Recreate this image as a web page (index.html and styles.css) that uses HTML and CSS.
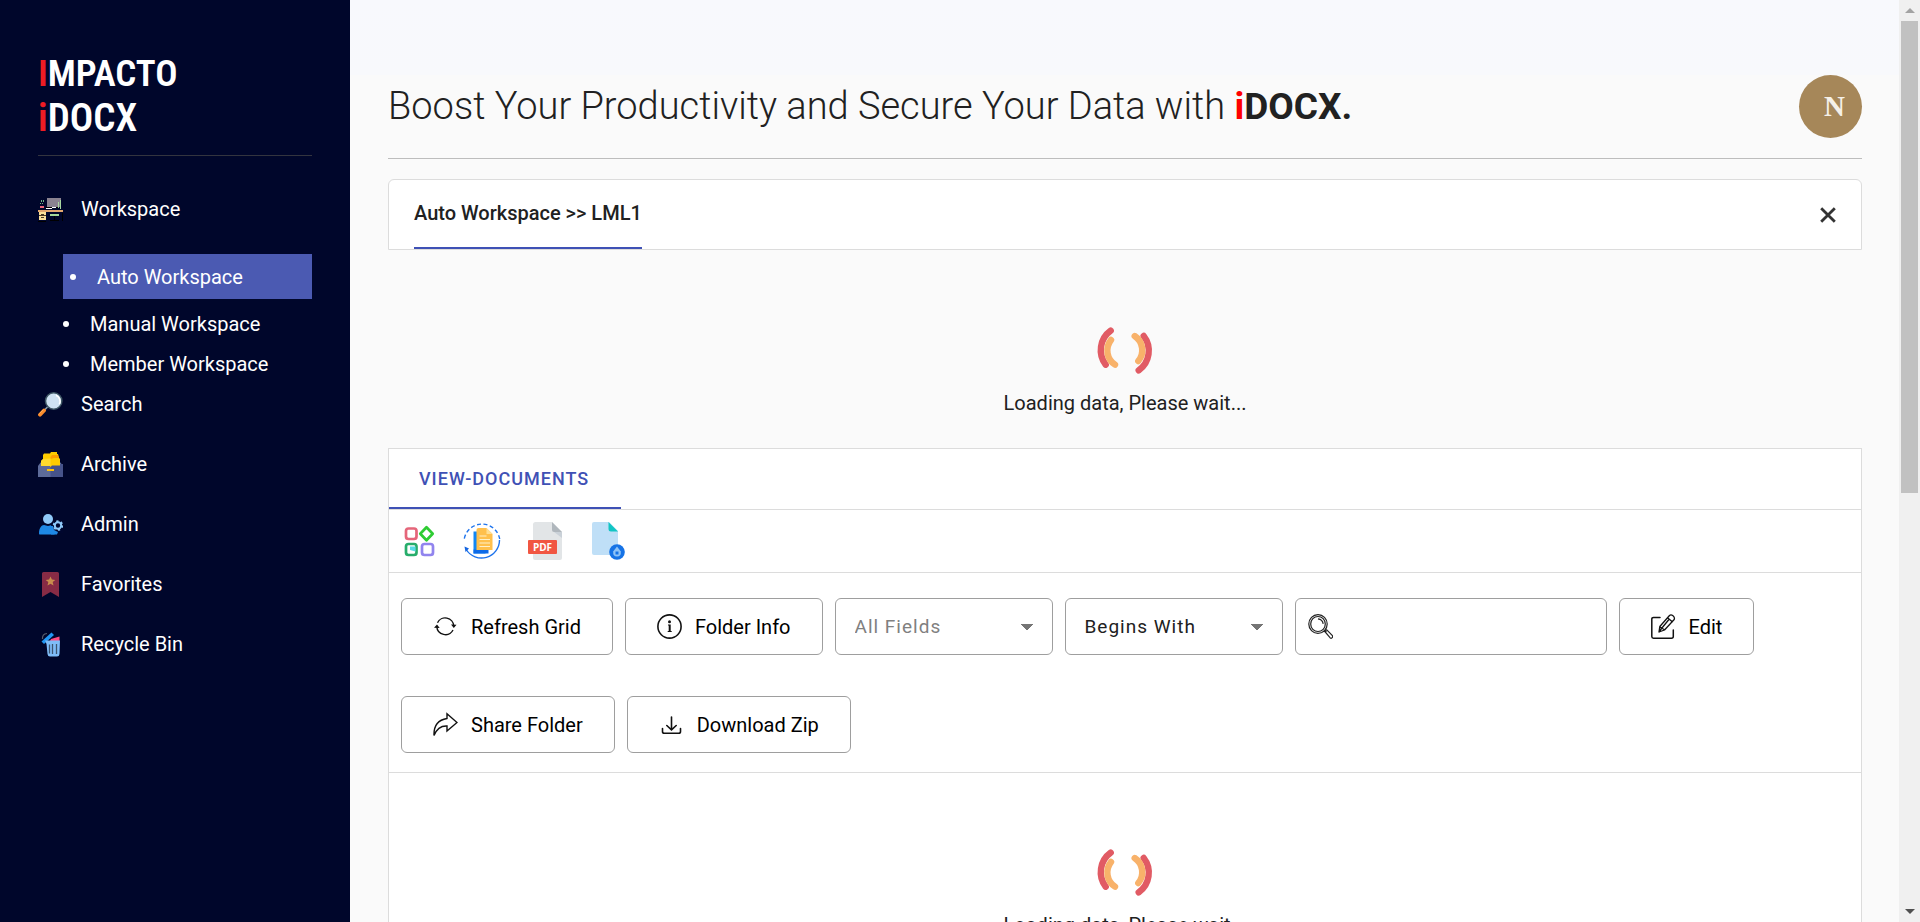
FILE: index.html
```html
<!DOCTYPE html>
<html lang="en">
<head>
<meta charset="utf-8">
<title>iDOCX</title>
<link rel="stylesheet" href="styles.css">
</head>
<body>
<svg class="defs" aria-hidden="true">
  <symbol id="spinner" viewBox="1 0 61 61">
    <g fill="none" stroke-width="6.4" stroke-linecap="round">
      <path stroke="#e15b64" d="M16.7 10.7A24 24 0 0 0 11.7 44.7M49.7 16A24 24 0 0 1 44.7 50.3"/>
      <path stroke="#f8b26a" d="M17 20A17 17 0 0 0 21 44.7M40.7 16A17 17 0 0 1 44.3 41"/>
    </g>
  </symbol>
</svg>
<div class="app">
  <aside class="sidebar">
    <a class="logo" href="#"><span class="logo-top"><i>I</i>MPACTO</span><span class="logo-bottom"><i>i</i>DOCX</span></a>
    <nav class="menu" aria-label="Main">
      <a class="menu-item menu-first" href="#">
        <svg class="menu-icon" viewBox="0 0 25 25"><path fill="#8a8290" d="M9 1h14v9H9z"/><path fill="#000" d="M8 10h12v1H8z"/><path fill="#fff" d="M8 11h6v1H8z"/><path fill="#fff" d="M14 10h4v1h-4z"/><path fill="#6fb98b" d="M3 3h1v2H3zM5 3h1v2H5zM2 6h1v1H2zM4 6h1v1H4z"/><path fill="#e8657a" d="M2 9h4v2H2z"/><path fill="#a8d6a0" d="M20 5h1v6h-1zM22 3h1v9h-1z"/><path fill="#e2a870" d="M0 13h25v2H0z"/><path fill="#fbe09a" d="M1 15h7v8H1z"/><path stroke="#4b3a25" d="M1 18.500h7M3 17.500h3M3 20.500h3"/><path fill="#a5d89a" d="M12 17h9v2h-9z"/><path fill="#000" d="M16 19h1v5h-1zM12 23h9v1h-9zM24 16h1v8h-1zM0 24h8v1H0z"/></svg>
        Workspace</a>
      <ul class="submenu">
        <li class="current"><a href="#">Auto Workspace</a></li>
        <li><a href="#">Manual Workspace</a></li>
        <li><a href="#">Member Workspace</a></li>
      </ul>
      <a class="menu-item" href="#">
        <svg class="menu-icon" viewBox="0 0 25 25"><path stroke="#8aa0ad" stroke-width="1.600" d="M7 17.500l3-3"/><path stroke="#fb8c2d" stroke-width="3.800" stroke-linecap="round" d="M2 22.700l4-4.200"/><path stroke="#ffb05c" stroke-width="1" d="M1.500 21.500l4-4"/><circle cx="15.700" cy="9" r="8.200" fill="#cfe2f2" stroke="#3d5563" stroke-width="1.500"/><path fill="none" stroke="#fff" stroke-width="1.600" d="M18 3.200a6.500 6.500 0 0 1 3.300 9"/></svg>
        Search</a>
      <a class="menu-item" href="#">
        <svg class="menu-icon" viewBox="0 0 25 25"><path fill="#5d6b99" d="M0 14l2.500-3.500h20L25 14v11H0z"/><path fill="#46538a" d="M12.500 12H25v13H12.500z"/><path fill="#fc0" d="M3 14V9l2-2V3l1-1.500h6L13 0h6v2h1l1 4 1 1v6.500h-8L12.500 15l-1-1.500z"/><path fill="#ffa000" d="M12.500 5L14 3h6l1 3h-5l-3.500 1z"/><path fill="#ffda2d" d="M3 14V9l2-2 7.500-.500v7.500z"/><path fill="#ffc107" d="M9 17h7v2H9z"/></svg>
        Archive</a>
      <a class="menu-item" href="#">
        <svg class="menu-icon" viewBox="0 0 25 25"><circle cx="10" cy="7" r="5" fill="#90caf9"/><path fill="#1e88e5" d="M1 21.500C1 16 3.500 13 6 13l4 1 4-1 3 8c0 1-.500 1.500-1.500 1.500H2c-.700 0-1-.300-1-1z"/><path fill="#00062e" d="M14 10h11v11h-5l-4-1-3-6z"/><path fill="#1e88e5" d="M13 14l2 0 1 4 4 2-1 2.500h-6z"/><circle cx="20" cy="13.500" r="3.200" fill="none" stroke="#90caf9" stroke-width="2"/><circle cx="20" cy="13.500" r="4.400" fill="none" stroke="#90caf9" stroke-width="1.700" stroke-dasharray="2.200 2.408"/></svg>
        Admin</a>
      <a class="menu-item" href="#">
        <svg class="menu-icon" viewBox="0 0 25 25"><path fill="#872b45" d="M4 1.500Q4 0 5.500 0h14Q21 0 21 1.500V25l-8.500-5L4 25z"/><path fill="#c98e4e" d="M12.500 4.500l1.400 3.100 3.400.300-2.600 2.200.800 3.400-3-1.800-3 1.800.800-3.400-2.600-2.200 3.400-.300z"/></svg>
        Favorites</a>
      <a class="menu-item" href="#">
        <svg class="menu-icon" viewBox="0 0 25 25"><path fill="none" stroke="#555b6b" stroke-width="1.200" d="M4.500 7Q4 2 9 1.500"/><path fill="#2196f3" d="M3.500 9.500l10-9 2.500 2.500-10 9z"/><path fill="#ff4b82" d="M13 7l8.500-2.500V9H12z"/><path fill="#7fbcf8" d="M7 8.500h15L21.500 22q-.200 2.500-2.500 2.500h-7q-2.200 0-2.500-2.500L8.500 12z"/><path stroke="#3d5570" stroke-width="1.300" d="M11.500 12.500v9M14.500 12v10M18.500 12v10"/></svg>
        Recycle Bin</a>
    </nav>
  </aside>

  <main class="main">
    <header class="header">
      <h1 class="title">Boost Your Productivity and Secure Your Data with <b><span class="accent">i</span>DOCX.</b></h1>
      <button class="avatar" type="button" aria-label="Account">N</button>
    </header>

    <section class="crumbs">
      <a class="crumb" href="#">Auto Workspace &gt;&gt; LML1</a>
      <button class="close" type="button" aria-label="Close"><svg viewBox="0 0 16 16"><path stroke="#333" stroke-width="2.800" d="M1.200 1.200l13.600 13.600M14.800 1.200L1.200 14.800"/></svg></button>
    </section>

    <div class="loading"><svg class="spinner"><use href="#spinner"/></svg><p>Loading data, Please wait...</p></div>

    <section class="documents">
      <div class="tabs"><button class="tab" type="button">VIEW-DOCUMENTS</button></div>
      <div class="tools">
        <button class="tool" type="button" aria-label="Grid">
          <svg viewBox="0 0 38 38"><g fill="#fff" stroke-width="2.700"><rect x="6" y="6.500" width="10.500" height="10.500" rx="2.500" stroke="#e5667a"/><path stroke="#2ecc33" stroke-linejoin="round" d="M26.500 5.300l6.200 6.500-6.200 6.500-6.200-6.500z"/><rect x="6" y="22" width="10.500" height="11" rx="2.500" stroke="#27ad6b"/><rect x="22" y="22" width="11" height="11" rx="2.500" stroke="#9184ee"/></g><path fill="#55dbe6" d="M10 24.500h5.500v5L10 28z"/></svg></button>
        <button class="tool" type="button" aria-label="Copy documents">
          <svg viewBox="0 0 38 38"><g fill="none" stroke="#1f74ec" stroke-width="1.400"><path d="M3.200 27.500A18 18 0 0 0 36.500 18"/><path stroke-dasharray="4 2.500" d="M36.700 17A18 18 0 0 0 1 19"/></g><path fill="#1565e0" d="M1.500 24.500l4.500 2-3.500 3.500z"/><path fill="#1187f5" d="M10.500 9.500h12v22h-12z"/><path fill="#0d6ae8" d="M10.500 27.500h15v4h-15z"/><path fill="#ffc04d" d="M13.500 8q0-2 2-2h8l6 6v16h-16z"/><path fill="#ffdf95" d="M23.500 6l6 6h-6z"/><path stroke="#fff0c8" stroke-width="1.200" d="M16.500 14h7M16.500 17.500h10.500M16.500 21h10.500M16.500 24.500h10.500"/></svg></button>
        <button class="tool" type="button" aria-label="Export PDF">
          <svg viewBox="0 0 38 38"><path fill="#e2e5e7" d="M7 2.500Q7 0 9.500 0H26l10 10v26q0 2-2 2H9q-2 0-2-2z"/><path fill="#cad1d8" d="M28 10l8 6v-6z"/><path fill="#b0b7bd" d="M26 0l10 10h-8q-2 0-2-2z"/><rect x="2" y="18" width="29" height="14" rx="1" fill="#f15642"/><text class="pdf-label" x="16.500" y="28.500" text-anchor="middle">PDF</text></svg></button>
        <button class="tool" type="button" aria-label="Document data">
          <svg viewBox="0 0 38 38"><path fill="#bfdff7" d="M3 2q0-2 2-2h15l9 9v24H5q-2 0-2-2z"/><path fill="#12c5c4" d="M19.500 0L29 9.500h-7q-2.500 0-2.500-2.500z"/><circle cx="28" cy="30" r="7.800" fill="#1673e6"/><path fill="#8ec3f7" d="M28 24.500l3.800 5q.500 5-3.800 5t-3.800-5z"/><path fill="#1673e6" d="M26.500 29.500h3v3h-3z"/></svg></button>
      </div>
      <div class="actions">
        <button class="btn" type="button"><svg class="btn-icon" viewBox="0 0 25 25"><g fill="none" stroke="#111" stroke-width="1.400"><path d="M4.500 8.700A8.600 8.600 0 0 1 20.800 12M20 16A8.600 8.600 0 0 1 3.800 12.500"/></g><path fill="#111" d="M18 10.500l5.500.300-2.700 3.200zM1 13.700l3-3.200 2.700 3.500z"/></svg>Refresh Grid</button>
        <button class="btn" type="button"><svg class="btn-icon" viewBox="0 0 25 25"><circle cx="12.500" cy="12.500" r="11.600" fill="none" stroke="#111" stroke-width="1.600"/><circle cx="12.500" cy="7.700" r="1.500" fill="#111"/><path fill="#111" d="M11 10.500h2.700v6.500h1V18h-4v-1h1v-5.500H11z"/></svg>Folder Info</button>
        <select class="select select-muted" aria-label="Field"><option>All Fields</option></select>
        <select class="select" aria-label="Match"><option>Begins With</option></select>
        <div class="search">
          <svg class="search-icon" viewBox="0 0 25 25"><g fill="none" stroke="#222" stroke-width="1.200"><ellipse cx="10" cy="10" rx="9.200" ry="9.400"/><ellipse cx="10" cy="10" rx="7.300" ry="7.500"/><path d="M10 4.800q4.500.500 5.200 5M16.400 17l5.800 6.900q1.200.800 2-.200t.200-2L18.300 15.300M15 17.800l1.500-.800M17 16.200l1.600 1.200"/></g></svg>
          <input type="text" aria-label="Search documents">
        </div>
        <button class="btn" type="button"><svg class="btn-icon" viewBox="0 0 25 25"><g fill="none" stroke="#111" stroke-width="1.500" stroke-linejoin="round" stroke-linecap="round"><path d="M9 3.500H2.500Q.800 3.500.800 5v17.500q0 1.700 1.700 1.700h18q1.800 0 1.800-1.700V16"/><path stroke-width="1.300" d="M8 18l.800-5.500L18.500 1.500q1.500-1.300 3.500.300t1.200 3.700L13.500 16zM16.500 3.800l4.800 4M8.800 12.800l4.500 3M10.500 14.500l7-8.500M8 18l2.500-3.500"/></g></svg>Edit</button>
        <button class="btn" type="button"><svg class="btn-icon" viewBox="0 0 25 25"><path fill="none" stroke="#111" stroke-width="1.400" stroke-linejoin="miter" d="M14 1.800l10 8.700-10 8.500v-5Q5 13.500 1 23.500.500 8.500 14 6.500z"/></svg>Share Folder</button>
        <button class="btn" type="button"><svg class="btn-icon" viewBox="0 0 25 25"><g fill="none" stroke="#111" stroke-width="1.600" stroke-linecap="round"><path d="M12.500 5v12.500M7.800 13.500l4.700 4.300 4.700-4.300M3.500 16.500v3q0 1.800 1.800 1.800h14.400q1.800 0 1.800-1.800v-3"/></g></svg>Download Zip</button>
      </div>
      <div class="loading"><svg class="spinner"><use href="#spinner"/></svg><p>Loading data, Please wait...</p></div>
    </section>
  </main>

  <div class="scrollbar" aria-hidden="true">
    <span class="arrow arrow-up"></span>
    <span class="track"><span class="thumb"></span></span>
    <span class="arrow arrow-down"></span>
  </div>
</div>
</body>
</html>
```
FILE: styles.css
```css
* { box-sizing: border-box; }

body {
  margin: 0;
  font: 400 20px/24px Roboto, "Liberation Sans", sans-serif;
  color: #212121;
  background: #fafafa;
}

a { color: inherit; text-decoration: none; }
button, input, select { font: inherit; color: inherit; }
button { padding: 0; border: 0; background: none; cursor: pointer; }
svg { display: block; flex: none; }
.defs { position: absolute; width: 0; height: 0; }

.app {
  display: grid;
  grid-template-columns: 350px minmax(0, 1fr) 21px;
  height: 100vh;
  overflow: hidden;
}

/* Sidebar */
.sidebar {
  padding: 50px 38px 0;
  color: #fff;
  background: #00062b;
}

.logo {
  display: flex;
  flex-direction: column;
  height: 106px;
  padding-top: 2px;
  border-bottom: 1px solid #33343f;
  font: 600 37px/44px "Roboto Condensed", "Liberation Sans Narrow", Roboto, sans-serif;
}
.logo i { font-style: normal; color: #ed1c24; }
.logo-bottom { font-size: 39px; }

.menu { padding-top: 23px; }

.menu-item {
  display: flex;
  align-items: center;
  gap: 18px;
  height: 60px;
}
.menu-first { margin-bottom: 15px; }
.menu-icon { width: 25px; height: 25px; }

.submenu {
  margin: 0 0 0 25px;
  padding: 0;
  list-style: none;
}
.submenu li {
  display: flex;
  align-items: center;
  gap: 21px;
  height: 40px;
}
.submenu li::before {
  content: "";
  width: 6px;
  height: 6px;
  border-radius: 50%;
  background: #fff;
}
.submenu .current {
  height: 45px;
  margin-bottom: 5px;
  padding-left: 7px;
  background: #4b5ab2;
}
.submenu + .menu-item { margin-top: -10px; }

/* Main area */
.main {
  padding: 75px 37px 0 38px;
  overflow: hidden;
  background: linear-gradient(#f8f9fd, #f8f9fc) top / 100% 75px no-repeat #fafafa;
}

.header {
  display: flex;
  justify-content: space-between;
  align-items: flex-start;
  height: 84px;
  margin-bottom: 20px;
  border-bottom: 1px solid #bdbdbd;
}
.title { margin: 0; font-size: 38px; line-height: 62px; font-weight: 300; }
.title b { font-size: 37px; font-weight: 700; }
.accent { color: #f00; }

.avatar {
  width: 63px;
  height: 63px;
  padding-left: 8px;
  border-radius: 50%;
  font: 700 29px/63px "Liberation Serif", serif;
  color: #f5f0e8;
  background: #a68759;
}

.crumbs {
  display: flex;
  justify-content: space-between;
  align-items: stretch;
  height: 71px;
  padding: 0 25px;
  border: 1px solid #dcdcdc;
  border-radius: 6px 6px 0 0;
  background: #fff;
}
.crumb {
  border-bottom: 2px solid #3f51b5;
  font-weight: 500;
  line-height: 66px;
}
.close svg { width: 16px; height: 16px; }

.loading {
  display: flex;
  flex-direction: column;
  align-items: center;
  padding: 70px 0 33px;
}
.loading p { margin: 10px 0 0; }
.spinner { width: 61px; height: 61px; }

/* Document panel */
.documents { border: 1px solid #dcdcdc; background: #fff; }
.documents .loading { padding-top: 69px; }

.tabs { height: 61px; border-bottom: 1px solid #dcdcdc; }
.tab {
  height: 60px;
  padding: 2px 32px 0 30px;
  border-bottom: 2px solid #3f51b5;
  font-size: 18px;
  font-weight: 500;
  letter-spacing: 1px;
  color: #3f51b5;
}

.tools {
  display: flex;
  gap: 25px;
  padding: 12px 11px;
  border-bottom: 1px solid #dcdcdc;
}
.tool svg { width: 38px; height: 38px; }
.pdf-label { font: 700 10px "Open Sans", sans-serif; fill: #fff; }

.actions {
  display: flex;
  flex-wrap: wrap;
  gap: 41px 12px;
  padding: 25px 12px 19px;
  border-bottom: 1px solid #dcdcdc;
}
.btn {
  display: flex;
  align-items: center;
  gap: 13px;
  height: 57px;
  padding: 0 31px;
  border: 1px solid #9e9e9e;
  border-radius: 6px;
  color: #000;
}
.btn-icon { width: 25px; height: 25px; }

.select {
  width: 218px;
  height: 57px;
  padding: 0 19px;
  border: 1px solid #9e9e9e;
  border-radius: 6px;
  font-size: 19px;
  letter-spacing: 1px;
  appearance: none;
  background:
    linear-gradient(to bottom right, #757575 50%, transparent 51%) right 19px center / 6px 6px no-repeat,
    linear-gradient(to bottom left, #757575 50%, transparent 51%) right 25px center / 6px 6px no-repeat,
    #fff;
}
.select-muted { color: #808080; }

.search {
  display: flex;
  align-items: center;
  gap: 12px;
  width: 312px;
  height: 57px;
  padding: 0 12px;
  border: 1px solid #9e9e9e;
  border-radius: 6px;
}
.search input { flex: 1; min-width: 0; border: 0; outline: 0; background: none; }
.search-icon { width: 25px; height: 31px; }

/* Scrollbar */
.scrollbar {
  display: flex;
  flex-direction: column;
  background: #f0f0f0;
}
.arrow { height: 21px; display: grid; place-items: center; }
.arrow::before { content: ""; border: 5px solid transparent; }
.arrow-up::before { border-top: 0; border-bottom-color: #a3a3a3; }
.arrow-down::before { border-bottom: 0; border-top-color: #505050; }
.track { flex: 1; padding: 0 2px; }
.thumb { display: block; height: 53.6%; background: #c1c1c1; }
```
